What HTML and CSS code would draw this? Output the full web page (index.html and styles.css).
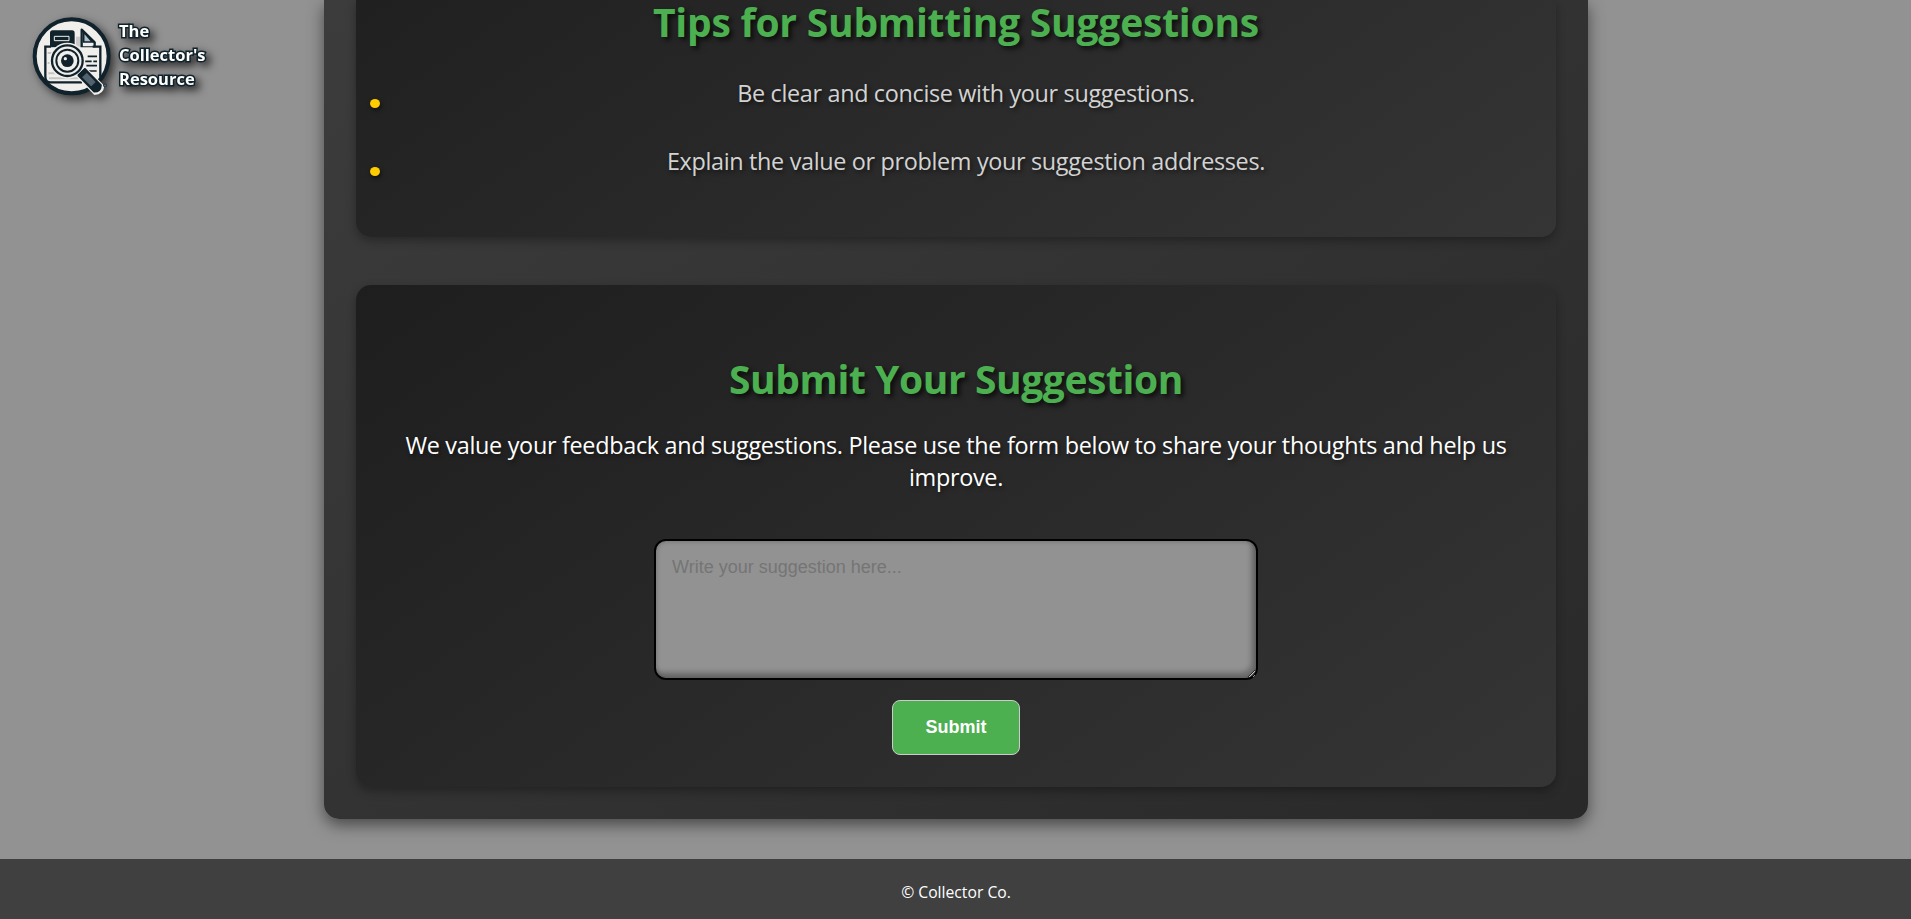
FILE: index.html
```
<!DOCTYPE html>
<html lang="en">
<head>
<meta charset="utf-8">
<title>The Collector's Resource</title>
<link rel="stylesheet" href="styles.css">
</head>
<body>
<a class="brand">
  <svg class="brand-logo" viewBox="0 0 276 270" width="92" height="90" aria-hidden="true">
    <circle cx="140" cy="130" r="111" fill="#f1efec" stroke="#10222b" stroke-width="12"/>
    <path d="M75 104V60q0-8 8-8h58q8 0 8 8v44z" fill="#10222b"/>
    <path d="M88 83V70h44v13z" fill="#10222b" stroke="#f1efec" stroke-width="3"/>
    <path d="M153 71h14v30h-14z" fill="#c9cac9"/>
    <path d="M170 103V50l39 38v15z" fill="#f1efec" stroke="#10222b" stroke-width="7" stroke-linejoin="round"/>
    <path d="M176 57v30h26z" fill="#aebfc9" stroke="#10222b" stroke-width="5"/>
    <path d="M64 103h160v92H75q-11-6-11-22z" fill="#f1efec"/>
    <path d="M78 101H61v90q0 17 16 17h94M203 101h23v102" fill="none" stroke="#10222b" stroke-width="7"/>
    <path d="M68 120h17M68 150h11M70 181h24M72 196h88" stroke="#c3c5c3" stroke-width="6"/>
    <path d="M188 130h28M178 145h22M205 145h11M184 158h32M188 174h27" stroke="#10222b" stroke-width="5"/>
    <path d="M152 188l28-28 58 58q-2 26-30 28z" fill="#f1efec"/>
    <circle cx="127" cy="143" r="54" fill="#f1efec"/>
    <circle cx="127" cy="143" r="46" fill="none" stroke="#10222b" stroke-width="7"/>
    <circle cx="127" cy="143" r="33" fill="#f1efec" stroke="#10222b" stroke-width="6"/>
    <circle cx="127" cy="143" r="19" fill="#10222b"/>
    <circle cx="121" cy="137" r="5" fill="#f1efec"/>
    <path d="M161 187l19-18 47 48q-1 18-19 18z" fill="#53636d" stroke="#10222b" stroke-width="7" stroke-linejoin="round"/>
    <path d="M158 185l21-20 10 11-21 20zM194 224l22-21 11 13q-1 18-19 20z" fill="#10222b"/>
    <circle cx="240" cy="217" r="6" fill="#263f4c"/>
    <circle cx="240" cy="217" r="2" fill="#7993a0"/>
  </svg>
  <span class="brand-name">The<br>Collector's<br>Resource</span>
</a>

<main class="container">
  <section class="card card-tips">
    <h2 class="card-title">Tips for Submitting Suggestions</h2>
    <ul class="tips">
      <li class="tip">Be clear and concise with your suggestions.</li>
      <li class="tip">Explain the value or problem your suggestion addresses.</li>
    </ul>
  </section>
  <section class="card card-form">
    <h2 class="card-title">Submit Your Suggestion</h2>
    <p class="intro">We value your feedback and suggestions. Please use the form below to share your thoughts and help us improve.</p>
    <form class="form">
      <textarea class="field" placeholder="Write your suggestion here..."></textarea>
      <button class="submit" type="button">Submit</button>
    </form>
  </section>
</main>

<footer class="footer">© Collector Co.</footer>
</body>
</html>
```
FILE: styles.css
```
* { box-sizing: border-box; }

body {
  margin: 0;
  height: 919px;
  overflow: hidden;
  background: #929292;
  color: #fff;
  font-family: "Segoe UI", "Open Sans", sans-serif;
}

/* Brand badge floats over the page */
.brand {
  position: absolute;
  top: 13px;
  left: 25px;
  display: flex;
  align-items: flex-start;
  gap: 2px;
}

.brand-logo {
  display: block;
  filter: drop-shadow(4px 4px 5px rgba(0, 0, 0, 0.65));
}

.brand-name {
  padding-top: 6px;
  font-size: 16.5px;
  font-weight: bold;
  line-height: 24px;
  -webkit-text-stroke: 3px #10222b;
  paint-order: stroke fill;
  filter: drop-shadow(4px 4px 4px rgba(0, 0, 0, 0.7));
}

.container {
  width: 1264px;
  margin: 0 0 40px 324px;
  padding: 0 32px 32px;
  border-radius: 0 0 15px 15px;
  background: linear-gradient(145deg, #3c3c3c, #292929);
  box-shadow: 0 6px 16px rgba(0, 0, 0, 0.5);
}

.card {
  padding: 0 32px;
  text-align: center;
  box-shadow: 0 4px 10px rgba(0, 0, 0, 0.3);
}

.card-tips {
  height: 237px;
  margin-bottom: 48px;
  padding-left: 0;
  padding-right: 0;
  border-radius: 0 0 15px 15px;
  background: linear-gradient(145deg, #202020, #353535);
}

.card-form {
  padding-top: 72px;
  padding-bottom: 32px;
  border-radius: 15px;
  background: linear-gradient(145deg, #1e1e1e, #353535);
}

.card-title {
  margin: 0;
  color: #4caf50;
  font-size: 39px;
  line-height: 43px;
  letter-spacing: -0.22px;
  text-shadow: 3px 3px 5px rgba(0, 0, 0, 0.7);
}

.card-form .card-title { letter-spacing: -0.42px; }

.tips {
  margin: 34px 0 0;
  padding: 0;
  list-style: none;
}

.tip {
  position: relative;
  margin-bottom: 36px;
  padding-left: 20px;
  color: #d3d3d3;
  font-size: 23.4px;
  line-height: 32px;
  letter-spacing: -0.33px;
  text-shadow: 2px 2px 4px rgba(0, 0, 0, 0.6);
}

.tip::before {
  content: "";
  position: absolute;
  top: 22px;
  left: 14px;
  width: 10px;
  height: 9px;
  border-radius: 50%;
  background: #fc0;
  box-shadow: 1px 2px 4px rgba(0, 0, 0, 0.6);
}

.intro {
  margin: 29px 0 46px;
  font-size: 23.4px;
  line-height: 32px;
  letter-spacing: -0.3px;
  text-shadow: 2px 2px 4px rgba(0, 0, 0, 0.5);
}

.form {
  display: flex;
  flex-direction: column;
  align-items: center;
  gap: 20px;
}

.field {
  width: 604px;
  height: 141px;
  padding: 16px;
  border: 2px solid #000;
  border-radius: 12px;
  background: #929292;
  box-shadow: inset -5px -6px 5px rgba(0, 0, 0, 0.24), inset 0 0 5px rgba(0, 0, 0, 0.28);
  font: 18px "Liberation Sans", Arial, sans-serif;
}

.field::placeholder { color: #757575; }

.submit {
  width: 128px;
  height: 55px;
  padding: 0;
  border: 1px solid #ccc;
  border-radius: 8px;
  background: #4caf50;
  color: #fff;
  font: bold 18px "Liberation Sans", Arial, sans-serif;
}

.footer {
  height: 60px;
  padding-left: 1px;
  background: #404040;
  font-size: 15.7px;
  line-height: 67px;
  text-align: center;
}
```
